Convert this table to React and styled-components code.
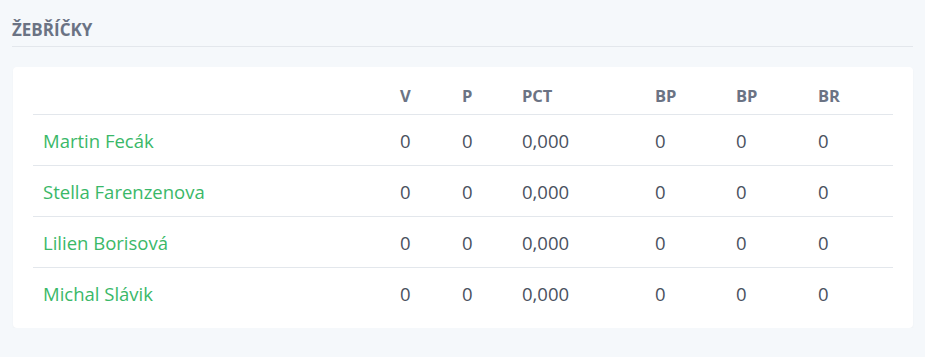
import React from "react";
import styled, { createGlobalStyle } from "styled-components";

const GlobalStyle = createGlobalStyle`
  body {
    margin: 0;
    background: #f5f8fb;
    font-family: "Open Sans", "Noto Sans", sans-serif;
  }
`;

const Page = styled.div`
  padding: 12px 12px 0 12px;
  width: 901px;
`;

const Title = styled.h2`
  margin: 0;
  padding: 6px 0 5px 0;
  font-size: 17px;
  font-weight: 700;
  color: #6b7384;
  border-bottom: 1px solid #e3e7ec;
`;

const Card = styled.div`
  margin-top: 20px;
  margin-left: 1px;
  background: #fff;
  border-radius: 4px;
  box-shadow: 0 1px 2px rgba(0, 0, 0, 0.04);
  padding: 0 20px 10px 20px;
`;

const TableRow = styled.div`
  display: grid;
  grid-template-columns: 357px 62px 60px 133px 81px 82px 85px;
  align-items: center;
  height: 50px;
  border-top: 1px solid #e3e7ec;
`;

const HeadRow = styled(TableRow)`
  border-top: none;
  border-bottom: 1px solid #e3e7ec;
  height: 48px;
  align-items: end;
  padding-bottom: 7px;
  box-sizing: border-box;
`;

const HeadCell = styled.div`
  padding-left: 10px;
  font-weight: 700;
  font-size: 16.5px;
  line-height: 22px;
  color: #6b7384;
`;

const Body = styled.div`
  & > ${TableRow}:first-child {
    border-top: none;
  }
`;

const Cell = styled.div`
  padding-left: 10px;
  font-size: 18.5px;
  line-height: 25px;
  padding-top: 1px;
  color: ${(p) => (p.$name ? "#3ab868" : "#4a5160")};
  white-space: nowrap;
`;

const players = [
  "Martin Fecák",
  "Stella Farenzenova",
  "Lilien Borisová",
  "Michal Slávik",
];

const columns = ["V", "P", "PCT", "BP", "BP", "BR"];

const values = ["0", "0", "0,000", "0", "0", "0"];

const App = () => {
  return (
    <>
      <GlobalStyle />
      <Page>
        <Title>ŽEBŘÍČKY</Title>
        <Card>
          <HeadRow>
            <HeadCell />
            {columns.map((col, index) => (
              <HeadCell key={index}>{col}</HeadCell>
            ))}
          </HeadRow>
          <Body>
            {players.map((name) => (
              <TableRow key={name}>
                <Cell $name>{name}</Cell>
                {values.map((val, index) => (
                  <Cell key={index}>{val}</Cell>
                ))}
              </TableRow>
            ))}
          </Body>
        </Card>
      </Page>
    </>
  );
};

export default App;
